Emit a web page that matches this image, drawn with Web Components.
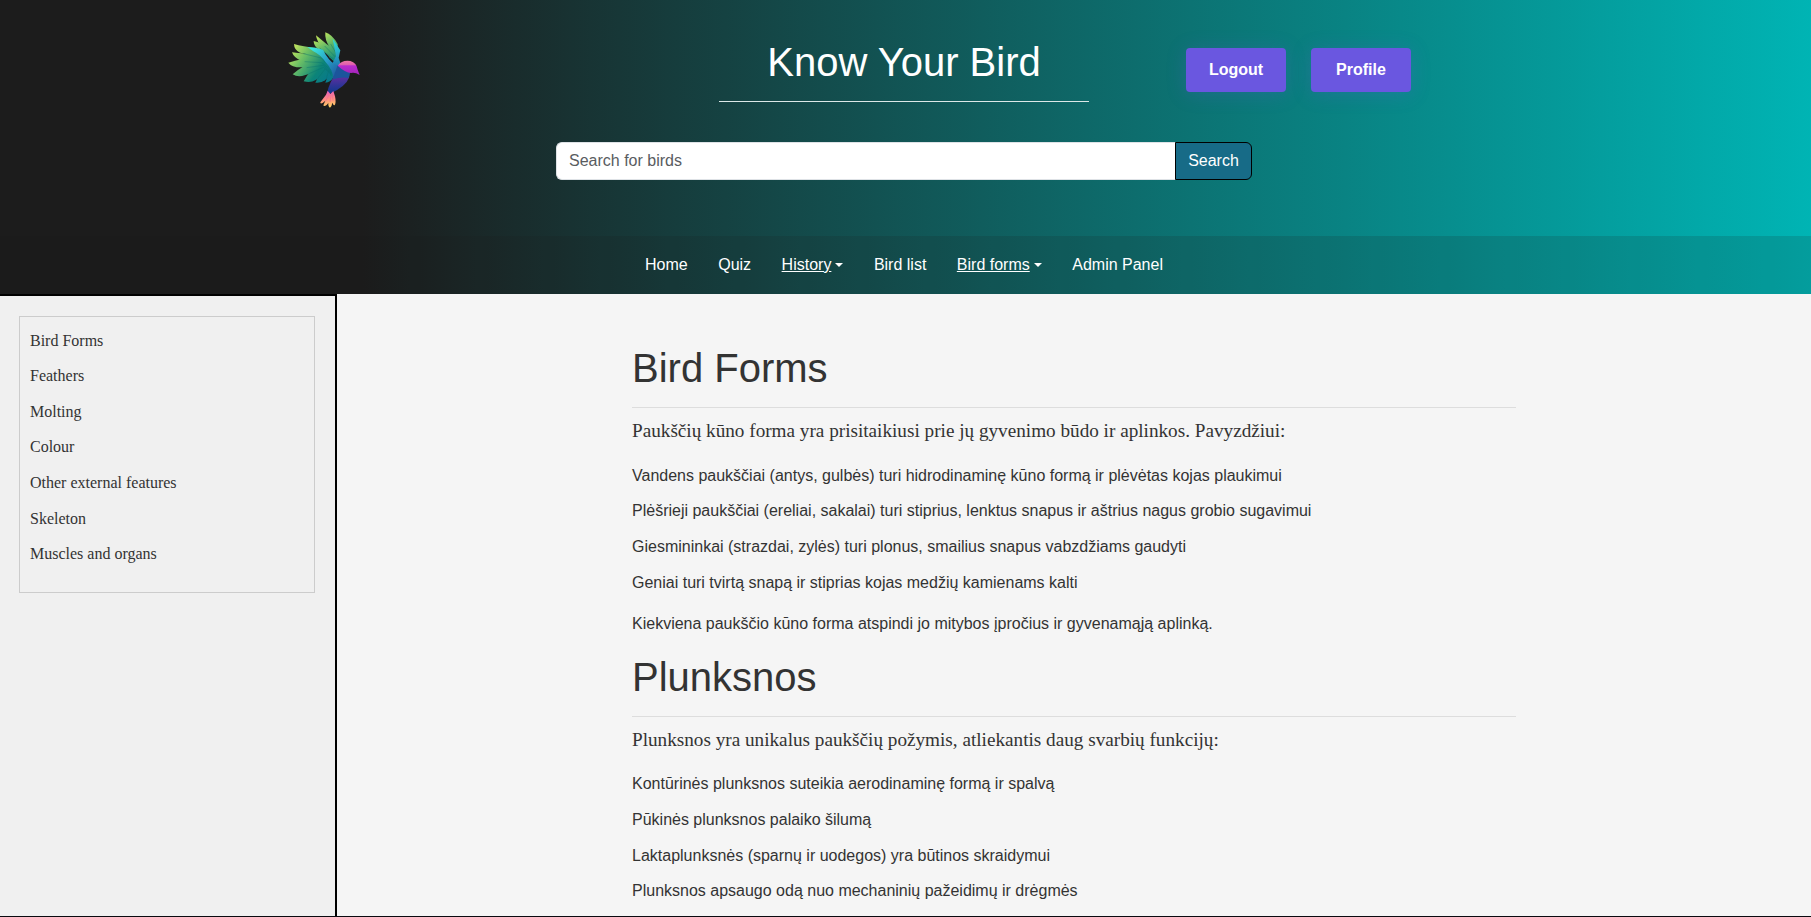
<!DOCTYPE html>
<html lang="lt">
<head>
<meta charset="utf-8">
<title>Know Your Bird</title>
<style>
html,body{height:100%}
body{margin:0;background:#f5f5f5;color:#333;font:16px/1.6 "Liberation Sans",Arial,sans-serif;overflow:hidden}
</style>
</head>
<body>
<bird-app></bird-app>
<script>
const define=(name,html)=>customElements.define(name,class extends HTMLElement{
  constructor(){super();this.attachShadow({mode:'open'}).innerHTML=html;}
});

define('bird-logo',`<style>:host{display:block;width:110px;height:100px}svg{display:block;width:100%;height:100%}</style>
<svg viewBox="0 0 330 300">
<defs>
<linearGradient id="f" x1="60" y1="80" x2="180" y2="165" gradientUnits="userSpaceOnUse"><stop offset="0" stop-color="#d2e85c"/><stop offset=".35" stop-color="#6cbf65"/><stop offset=".75" stop-color="#0c8478"/><stop offset="1" stop-color="#087a8a"/></linearGradient>
<linearGradient id="r" x1="150" y1="40" x2="195" y2="120" gradientUnits="userSpaceOnUse"><stop offset="0" stop-color="#c8e85a"/><stop offset=".5" stop-color="#5cb568"/><stop offset="1" stop-color="#118a7c"/></linearGradient>
<linearGradient id="c" x1="125" y1="85" x2="215" y2="170" gradientUnits="userSpaceOnUse"><stop offset="0" stop-color="#3ce8dc"/><stop offset=".5" stop-color="#2699c4"/><stop offset="1" stop-color="#1d4a96"/></linearGradient>
<linearGradient id="d" x1="200" y1="60" x2="205" y2="135" gradientUnits="userSpaceOnUse"><stop offset="0" stop-color="#2fdcd8"/><stop offset="1" stop-color="#207fb5"/></linearGradient>
<linearGradient id="b" x1="200" y1="172" x2="200" y2="225" gradientUnits="userSpaceOnUse"><stop offset="0" stop-color="#5a309f"/><stop offset=".5" stop-color="#2c3496"/><stop offset="1" stop-color="#073a8a"/></linearGradient>
<linearGradient id="h" x1="0" y1="122" x2="0" y2="165" gradientUnits="userSpaceOnUse"><stop offset="0" stop-color="#ee78a4"/><stop offset=".28" stop-color="#df5fae"/><stop offset=".36" stop-color="#b82ccd"/><stop offset="1" stop-color="#a224b8"/></linearGradient>
<linearGradient id="t" x1="175" y1="212" x2="180" y2="260" gradientUnits="userSpaceOnUse"><stop offset="0" stop-color="#e65abd"/><stop offset=".5" stop-color="#ff8a83"/><stop offset="1" stop-color="#ffcf62"/></linearGradient>
</defs>
<path fill="#0b8078" d="M105 88L150 92L195 150L185 172L150 165L118 150L110 125Z"/>
<path fill="#1b8f7a" d="M160 84L180 80L200 100L196 128L178 112Z"/>
<g fill="url(#r)">
<path d="M131 63Q131 76 143 86L165 98L190 120L184 94Q158 68 131 63Z"/>
<path d="M138 46Q140 65 158 84L201 125L201 93Q166 72 138 46Z"/>
<path d="M166 37Q164 60 178 80L203 108L203 72Q186 43 166 37Z"/>
</g>
<g fill="url(#f)">
<path d="M72 72Q72 89 90 98L130 106L164 114L140 84Q98 80 72 72Z"/>
<path d="M66 97Q72 114 93 122L173 136L148 98Q98 103 66 97Z"/>
<path d="M55 128Q66 143 96 142L178 139L146 107Q94 116 55 128Z"/>
<path d="M68 163Q84 173 106 165L184 145L150 117Q100 134 68 163Z"/>
<path d="M101 184Q122 190 137 180L186 152L154 124Q117 153 101 184Z"/>
<path d="M136 188Q154 190 165 181L194 155L168 130Q148 163 136 188Z"/>
<path d="M166 188Q181 187 189 174L199 153L182 136Q175 166 166 188Z"/>
</g>
<g fill="none" stroke="#07726f" stroke-width="2" opacity=".6">
<path d="M100 101L154 114L194 154M104 125L155 128L190 156M110 143L160 136L187 160M115 162L160 142L187 163M142 177L166 146L184 165M168 179L177 149L184 168"/>
<path d="M149 84L190 117M164 78L195 110M182 72L200 102"/>
</g>
<path fill="url(#d)" d="M188 56L211 91L206 113L211 129L203 145L187 131L198 108Z"/>
<path fill="url(#c)" d="M112 81Q136 81 159 89Q164 101 177 118Q190 133 205 137L204 165L191 183Q191 151 167 127Q153 105 130 94Z"/>
<path fill="url(#b)" d="M202 150L236 158Q240 164 237 173Q227 200 178 222L170 224Q174 204 182 187Z"/>
<path fill="#1c559c" d="M203 136Q222 143 241 157L236 174Q216 170 188 178Q195 158 203 136Z"/>
<path fill="url(#h)" d="M203 137Q216 119 241 123Q260 128 263 149L269 165Q255 156 243 159Q226 158 203 137Z"/>
<path fill="url(#t)" d="M173 212L168 224L151 247Q150 252 158 249L166 242L160 256Q162 261 170 255L175 249Q174 260 180 263Q186 257 187 248Q190 256 194 256Q199 247 195 229L190 213L181 222Z"/>
<path fill="none" stroke="#ed6f92" stroke-width="2" d="M177 225L167 243M183 225L180 246M187 222L189 242"/>
</svg>`);

define('pill-button',`<style>:host{display:flex;align-items:center;justify-content:center;width:100px;height:44px;border-radius:4px;background:#6a57e0;color:#fff;font-weight:700;box-shadow:0 2px 20px rgba(106,87,224,.22)}</style><slot></slot>`);

define('search-bar',`<style>:host{display:flex;width:696px;height:38px;line-height:24px}
.i{box-sizing:border-box;width:620px;background:#fff;border:1px solid #dee2e6;border-right:0;border-radius:6px 0 0 6px;padding:6px 12px;color:#595c5f}
.b{box-sizing:border-box;flex:1;margin-left:-1px;border:1px solid #000;border-radius:0 6px 6px 0;background:#176b87;color:#fff;text-align:center;padding:6px 0}</style>
<div class="i">Search for birds</div><div class="b">Search</div>`);

define('nav-item',`<style>:host{display:flex;align-items:center;color:#fff;line-height:24px}
:host([menu]) span{text-decoration:underline}
i{display:none;margin-left:4px;border:4.8px solid transparent;border-top-color:#fff;border-bottom:0}:host([menu]) i{display:block}</style><span><slot></slot></span><i></i>`);

define('site-header',`<style>:host{display:block;background:linear-gradient(90deg,#1c1c1c 20%,#00b4b4 100%)}
.top{height:236px;box-sizing:border-box;padding-top:20px;display:grid;grid-template-columns:270px 449px 370px 97px auto;grid-template-rows:122px 38px}
bird-logo{grid-column:2}
.title{grid-column:3;color:#fff;text-align:center;padding-top:18px}
h1{font-size:40px;line-height:48px;font-weight:400;margin:0;padding-bottom:15px;border-bottom:1px solid #dce8e8}
.act{grid-column:5;display:flex;gap:25px;padding-top:28px}
search-bar{grid-column:1/-1;margin-left:556px}
nav{height:58px;display:flex;gap:30.5px;padding-left:645px;background:rgba(28,28,28,.15)}</style>
<div class="top"><bird-logo></bird-logo><div class="title"><h1>Know Your Bird</h1></div>
<div class="act"><pill-button>Logout</pill-button><pill-button>Profile</pill-button></div>
<search-bar></search-bar></div>
<nav><nav-item>Home</nav-item><nav-item>Quiz</nav-item><nav-item menu>History</nav-item><nav-item>Bird list</nav-item><nav-item menu>Bird forms</nav-item><nav-item>Admin Panel</nav-item></nav>`);

define('side-menu',`<style>:host{display:block;box-sizing:border-box;width:337px;border:solid #000;border-width:2px 2px 0 0;background:#f0f0f0;padding:20px 20px 0 19px}
ul{list-style:none;margin:0;box-sizing:border-box;height:277px;border:1px solid #ccc;padding:10.6px 10px;font:16px/25.6px "Liberation Serif","Times New Roman",serif;color:#333}
li{margin-bottom:10px}</style>
<ul><li>Bird Forms</li><li>Feathers</li><li>Molting</li><li>Colour</li><li>Other external features</li><li>Skeleton</li><li>Muscles and organs</li></ul>`);

define('topic-section',`<style>:host{display:block}
h1{font-size:40px;line-height:48px;font-weight:400;margin:0;padding-bottom:15px;border-bottom:1px solid #ddd}
.lead{display:block;font:19.2px/30.7px "Liberation Serif","Times New Roman",serif;margin:8px 0 16.05px}</style>
<h1><slot name="title"></slot></h1><span class="lead"><slot name="lead"></slot></span><slot></slot>`);
define('topic-line',`<style>:host{display:block;margin-bottom:10px;height:25.6px;white-space:nowrap}:host([closing]){margin:15.9px 0 16.05px}</style><slot></slot>`);

define('bird-app',`<style>:host{display:grid;grid-template-rows:294px 622px 1px;height:917px}
.body{display:grid;grid-template-columns:337px 1fr;min-height:0}
main{padding:50px 295px 0 295px;overflow:hidden;min-width:0}
footer{background:#0a0a0f}</style>
<site-header></site-header>
<div class="body"><side-menu></side-menu><main>
<topic-section><span slot="title">Bird Forms</span><span slot="lead">Paukščių kūno forma yra prisitaikiusi prie jų gyvenimo būdo ir aplinkos. Pavyzdžiui:</span>
<topic-line>Vandens paukščiai (antys, gulbės) turi hidrodinaminę kūno formą ir plėvėtas kojas plaukimui</topic-line>
<topic-line>Plėšrieji paukščiai (ereliai, sakalai) turi stiprius, lenktus snapus ir aštrius nagus grobio sugavimui</topic-line>
<topic-line>Giesmininkai (strazdai, zylės) turi plonus, smailius snapus vabzdžiams gaudyti</topic-line>
<topic-line>Geniai turi tvirtą snapą ir stiprias kojas medžių kamienams kalti</topic-line>
<topic-line closing>Kiekviena paukščio kūno forma atspindi jo mitybos įpročius ir gyvenamąją aplinką.</topic-line></topic-section>
<topic-section><span slot="title">Plunksnos</span><span slot="lead">Plunksnos yra unikalus paukščių požymis, atliekantis daug svarbių funkcijų:</span>
<topic-line>Kontūrinės plunksnos suteikia aerodinaminę formą ir spalvą</topic-line>
<topic-line>Pūkinės plunksnos palaiko šilumą</topic-line>
<topic-line>Laktaplunksnės (sparnų ir uodegos) yra būtinos skraidymui</topic-line>
<topic-line>Plunksnos apsaugo odą nuo mechaninių pažeidimų ir drėgmės</topic-line></topic-section>
</main></div><footer></footer>`);
</script>
</body>
</html>
